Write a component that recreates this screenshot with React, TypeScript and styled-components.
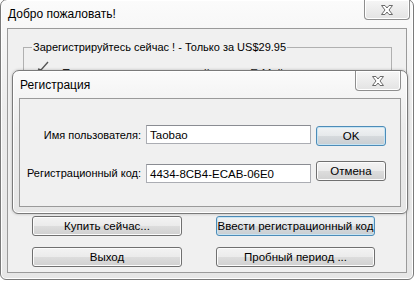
import React from "react";
import styled, { createGlobalStyle, css } from "styled-components";

const Global = createGlobalStyle`
  html, body { margin: 0; padding: 0; background: #ffffff; }
  body { font-family: "Liberation Sans", Arial, sans-serif; font-size: 11px; color: #000; }
  * { box-sizing: border-box; }
`;

const Page = styled.div`
  width: 419px;
  height: 285px;
  position: relative;
  overflow: hidden;
  background: #ffffff;
`;

const Window = styled.div<{ $w: number; $h: number }>`
  width: ${(p) => p.$w}px;
  height: ${(p) => p.$h}px;
  display: flex;
  flex-direction: column;
  border: 1px solid #7a7a7a;
  border-radius: 7px 7px 6px 6px;
  background: linear-gradient(#fbfbfb, #ececec 40%, #e6e6e6);
  box-shadow: inset 0 0 0 1px #ffffff;
`;

const OuterWindow = styled(Window)`
  margin-top: -1px;
`;

const TitleBar = styled.div<{ $h: number }>`
  height: ${(p) => p.$h}px;
  flex: none;
  display: flex;
  align-items: flex-start;
  justify-content: space-between;
  padding-left: 7px;
`;

const TitleText = styled.div<{ $top: number }>`
  padding-top: ${(p) => p.$top}px;
  font-size: 12px;
  color: #000;
`;

const CloseButton = styled.div<{ $right: number }>`
  width: 46px;
  height: 20px;
  margin-right: ${(p) => p.$right}px;
  border: 1px solid #8e8e8e;
  border-top: none;
  border-radius: 0 0 4px 4px;
  background: linear-gradient(#f6f6f6, #e3e3e3);
  box-shadow: inset 0 0 0 1px #ffffff;
  display: flex;
  align-items: center;
  justify-content: center;
`;

const ClientArea = styled.div<{ $mx: number; $mb: number }>`
  flex: 1;
  margin: 0 ${(p) => p.$mx}px ${(p) => p.$mb}px;
  border: 1px solid #9a9a9a;
  background: #f0f0f0;
  display: flex;
  flex-direction: column;
`;

const GroupBox = styled.fieldset`
  margin: 11px 14px 0 15px;
  padding: 0 0 0 12px;
  height: 160px;
  border: 1px solid #b0b0b0;
  border-radius: 0;
  position: relative;
`;

const Legend = styled.legend`
  padding: 0 1px 0 1px;
  margin-left: -4px;
  font-size: 11px;
  line-height: 14px;
`;

const PeekRow = styled.div`
  display: flex;
  align-items: flex-start;
  gap: 12px;
  margin-top: 7px;
  font-size: 11.5px;
  line-height: 14px;
  color: #222;
`;

const PeekText = styled.span`
  padding-top: 5px;
`;

const ButtonGrid = styled.div`
  display: grid;
  grid-template-columns: 150px 159px;
  column-gap: 34px;
  row-gap: 11px;
  margin: 16px 0 0 24px;
`;

const buttonBase = css`
  height: 20px;
  border: 1px solid #707070;
  border-radius: 3px;
  background: linear-gradient(#f3f3f3 0%, #ebebeb 49%, #dddddd 50%, #d0d0d0 100%);
  box-shadow: inset 0 0 0 1px #fcfcfc;
  font-family: "Liberation Sans", Arial, sans-serif;
  font-size: 11.5px;
  color: #000;
  display: flex;
  align-items: center;
  justify-content: center;
  padding: 0;
  white-space: nowrap;
`;

const Button = styled.div<{ $default?: boolean }>`
  ${buttonBase}
  ${(p) =>
    p.$default &&
    css`
      border-color: #4d8cb8;
      background: linear-gradient(#f1f3f4 0%, #e6e9eb 49%, #d6dadd 50%, #c9ced2 100%);
      box-shadow: inset 0 0 0 1px #c7e4f3;
    `}
`;

const Dialog = styled(Window)`
  position: absolute;
  left: 12px;
  top: 70px;
  box-shadow: inset 0 0 0 1px #ffffff, 0 0 3px rgba(0, 0, 0, 0.25);
`;

const DialogClient = styled.div`
  flex: 1;
  margin: 0 6px 6px;
  border: 1px solid #9a9a9a;
  background: #f0f0f0;
  display: grid;
  grid-template-columns: 121px 165px 70px;
  grid-auto-rows: 20px;
  column-gap: 5px;
  row-gap: 18px;
  align-content: start;
  padding: 26px 0 0 0;
`;

const Label = styled.div`
  display: flex;
  align-items: center;
  justify-content: flex-end;
  font-size: 11px;
  color: #000;
  white-space: nowrap;
`;

const Input = styled.div<{ $shift: number }>`
  height: 19px;
  margin-top: ${(p) => p.$shift}px;
  border: 1px solid #abadb3;
  border-top-color: #8a8c92;
  background: #ffffff;
  padding-left: 3px;
  display: flex;
  align-items: center;
  font-size: 11.5px;
  color: #000;
  white-space: nowrap;
`;

const DialogButton = styled(Button)<{ $shift: number }>`
  margin-top: ${(p) => p.$shift}px;
`;

const CloseGlyph = () => (
  <svg width="16" height="12" viewBox="0 0 16 12">
    <path
      d="M2.5 1.5 H6 L8 4 L10 1.5 H13.5 L10 6 L13.5 10.5 H10 L8 8 L6 10.5 H2.5 L6 6 Z"
      fill="#ffffff"
      stroke="#6a6a6a"
      strokeWidth="1"
      strokeLinejoin="round"
    />
  </svg>
);

const Check = () => (
  <svg width="14" height="10" viewBox="0 0 14 10">
    <path d="M2 8 L5 9 L12 1" fill="none" stroke="#555" strokeWidth="1.4" />
  </svg>
);

export default function App() {
  return (
    <Page>
      <Global />
      <OuterWindow $w={414} $h={281}>
        <TitleBar $h={28}>
          <TitleText $top={7}>Добро пожаловать!</TitleText>
          <CloseButton $right={3}>
            <CloseGlyph />
          </CloseButton>
        </TitleBar>
        <ClientArea $mx={6} $mb={6}>
          <GroupBox>
            <Legend>Зарегистрируйтесь сейчас ! - Только за US$29.95</Legend>
            <PeekRow>
              <Check />
              <PeekText>Получите регистрационный код по E-Mail</PeekText>
            </PeekRow>
          </GroupBox>
          <ButtonGrid>
            <Button>Купить сейчас...</Button>
            <Button $default>Ввести регистрационный код</Button>
            <Button>Выход</Button>
            <Button>Пробный период ...</Button>
          </ButtonGrid>
        </ClientArea>
      </OuterWindow>
      <Dialog $w={396} $h={144}>
        <TitleBar $h={27}>
          <TitleText $top={7}>Регистрация</TitleText>
          <CloseButton $right={6}>
            <CloseGlyph />
          </CloseButton>
        </TitleBar>
        <DialogClient>
          <Label>Имя пользователя:</Label>
          <Input $shift={0}>Taobao</Input>
          <DialogButton $default $shift={1}>OK</DialogButton>
          <Label>Регистрационный код:</Label>
          <Input $shift={1}>4434-8CB4-ECAB-06E0</Input>
          <DialogButton $shift={-2}>Отмена</DialogButton>
        </DialogClient>
      </Dialog>
    </Page>
  );
}
